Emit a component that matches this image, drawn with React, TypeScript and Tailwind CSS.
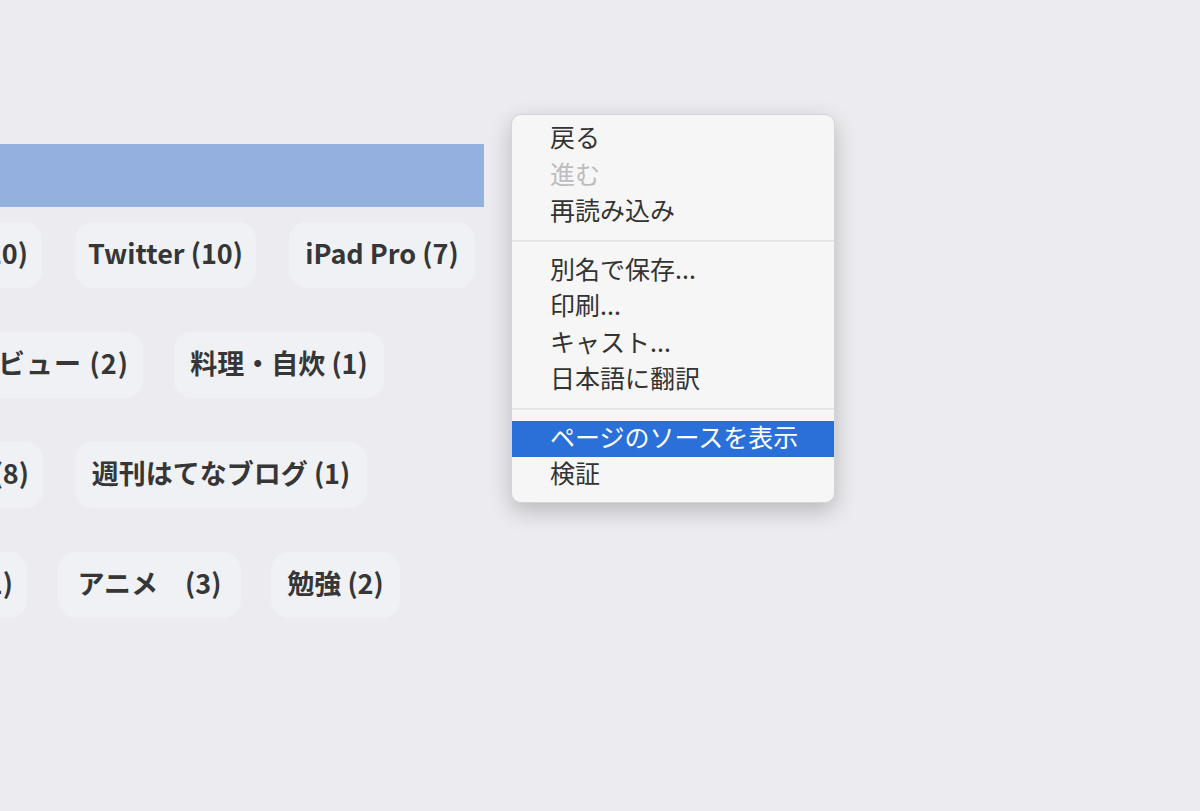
import React from 'react';

type MenuItem = { label: string; disabled?: boolean; active?: boolean } | 'sep';

const menuItems: MenuItem[] = [
  { label: '戻る' },
  { label: '進む', disabled: true },
  { label: '再読み込み' },
  'sep',
  { label: '別名で保存...' },
  { label: '印刷...' },
  { label: 'キャスト...' },
  { label: '日本語に翻訳' },
  'sep',
  { label: 'ページのソースを表示', active: true },
  { label: '検証' },
];

const font = { fontFamily: '"Noto Sans CJK JP", "Liberation Sans", sans-serif' };

function Chip({ label, className }: { label: string; className: string }) {
  return (
    <div
      className={`h-[66px] shrink-0 rounded-[18px] bg-[#eff1f5] flex items-center pb-[3px] text-[27px] font-bold text-[#363636] whitespace-nowrap ${className}`}
    >
      {label}
    </div>
  );
}

function ContextMenu() {
  return (
    <div className="absolute left-[511px] top-[114px] w-[324px] rounded-[10px] bg-[#f6f6f6] border border-[#d4d4d8] shadow-[0_8px_22px_rgba(0,0,0,0.22)] pt-[6px] pb-[8px] overflow-hidden">
      {menuItems.map((item, i) =>
        item === 'sep' ? (
          <div key={i} className="h-[22px] flex items-center">
            <div className="w-full h-[3px] bg-[#e3e3e5] border-b border-[#fbfbfb]" />
          </div>
        ) : (
          <div
            key={i}
            className={`h-[36.5px] flex items-center pl-[38px] pb-[5px] text-[25px] leading-none ${
              item.active
                ? 'bg-[#2b6fd9] text-white'
                : item.disabled
                ? 'text-[#bdbdbf]'
                : 'text-[#333333]'
            }`}
          >
            {item.label}
          </div>
        )
      )}
    </div>
  );
}

export default function App() {
  return (
    <div className="relative w-[1200px] h-[811px] bg-[#ececf0] overflow-hidden" style={font}>
      <div className="w-[484px] pt-[144px] flex flex-col">
        <div className="h-[63px] bg-[#93b0de]" />
        <div className="mt-[15px] flex flex-col gap-[44px]">
          <div className="flex gap-[33px] ml-[-140px]">
            <Chip label="ブログ (10)" className="w-[182px] justify-end pr-[14px]" />
            <Chip label="Twitter (10)" className="w-[181px] justify-center" />
            <Chip label="iPad Pro (7)" className="w-[186px] justify-center" />
          </div>
          <div className="flex gap-[31px] ml-[-60px]">
            <Chip label="レビュー (2)" className="w-[203px] justify-end pr-[14px] tracking-[0.04em]" />
            <Chip label="料理・自炊 (1)" className="w-[210px] justify-center" />
          </div>
          <div className="flex gap-[32px] ml-[-120px]">
            <Chip label="ガジェット (8)" className="w-[163px] justify-end pr-[14px]" />
            <Chip label="週刊はてなブログ (1)" className="w-[292px] justify-center" />
          </div>
          <div className="flex gap-[31px] ml-[-100px]">
            <Chip label="映画 (1)" className="w-[127px] justify-end pr-[14px]" />
            <Chip label="アニメ　(3)" className="w-[183px] justify-center" />
            <div className="ml-[-1px]">
              <Chip label="勉強 (2)" className="w-[129px] justify-center" />
            </div>
          </div>
        </div>
      </div>
      <ContextMenu />
    </div>
  );
}
